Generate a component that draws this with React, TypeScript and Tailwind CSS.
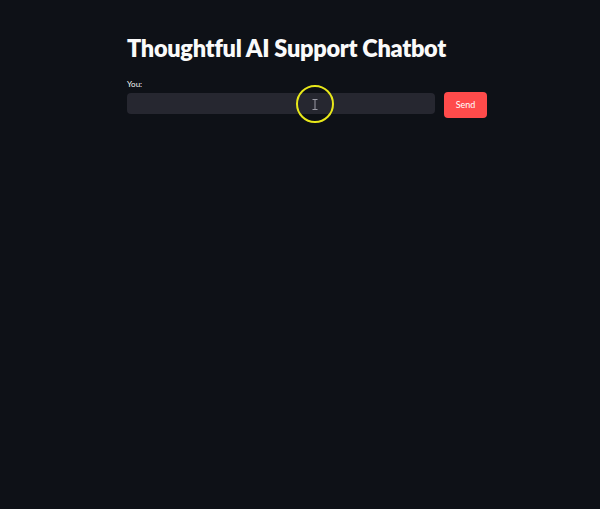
import React from 'react';

const App: React.FC = () => {
  return (
    <div
      className="relative min-h-[509px] w-full bg-[#0e1117] text-white"
      style={{ fontFamily: 'Lato, "Open Sans", sans-serif' }}
    >
      <div className="ml-[127px] w-[360px] pt-[33px]">
        <h1 className="text-[23.5px] font-extrabold leading-[30px] tracking-[-0.3px] text-[#fafafa]">
          Thoughtful AI Support Chatbot
        </h1>

        <div className="mt-[16px] flex items-end gap-[9px]">
          <div className="flex-1">
            <label className="block text-[8px] leading-[10px] text-[#fafafa]">You:</label>
            <div className="mt-[4px] h-[21px] rounded-[4px] bg-[#262730]" />
          </div>
          <button className="mb-[-4px] h-[26px] w-[43px] rounded-[4px] bg-[#ff4b4b] text-[9px] text-white">
            Send
          </button>
        </div>
      </div>

      {/* cursor highlight */}
      <div className="pointer-events-none absolute left-[296px] top-[85px] h-[38px] w-[38px] rounded-full border-2 border-[#e8e81a]">
        <svg
          className="absolute left-[14px] top-[12px]"
          width="6"
          height="11"
          viewBox="0 0 6 11"
          fill="none"
          stroke="#9a9aa4"
          strokeWidth="1"
        >
          <path d="M0.5 0.5h5M3 0.5v10M0.5 10.5h5" />
        </svg>
      </div>
    </div>
  );
};

export default App;
